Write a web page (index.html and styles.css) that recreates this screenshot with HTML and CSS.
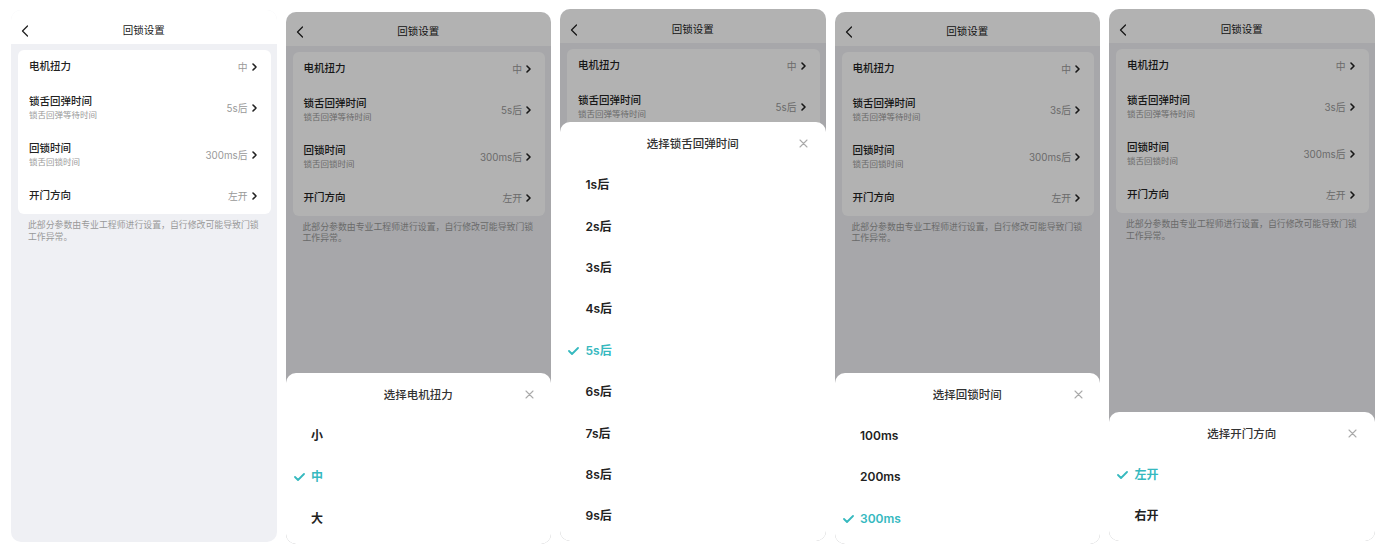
FILE: index.html
```html
<!DOCTYPE html>
<html lang="zh-CN">
<head>
  <meta charset="UTF-8">
  <meta name="viewport" content="width=device-width, initial-scale=1.0">
  <title>回锁设置</title>
  <link rel="stylesheet" href="styles.css">
</head>
<body>
  <div class="board">

    <!-- 1: settings page -->
    <div class="screen screen-a">
      <div class="nav">
        <svg class="back" width="8" height="12" viewBox="0 0 8 12"><polyline points="6.5,1 1.5,6 6.5,11" fill="none" stroke="#222" stroke-width="1.3" stroke-linecap="round" stroke-linejoin="round"/></svg>
        <div class="nav-title">回锁设置</div>
      </div>
      <div class="card">
        <div class="row"><div class="row-main"><div class="row-title">电机扭力</div></div><div class="row-value">中<svg class="arrow" width="5" height="8" viewBox="0 0 5 8"><polyline points="1,1 4,4 1,7" fill="none" stroke="#222" stroke-width="1.6" stroke-linecap="round" stroke-linejoin="round"/></svg></div></div>
        <div class="row"><div class="row-main"><div class="row-title">锁舌回弹时间</div><div class="row-sub">锁舌回弹等待时间</div></div><div class="row-value">5s后<svg class="arrow" width="5" height="8" viewBox="0 0 5 8"><polyline points="1,1 4,4 1,7" fill="none" stroke="#222" stroke-width="1.6" stroke-linecap="round" stroke-linejoin="round"/></svg></div></div>
        <div class="row"><div class="row-main"><div class="row-title">回锁时间</div><div class="row-sub">锁舌回锁时间</div></div><div class="row-value">300ms后<svg class="arrow" width="5" height="8" viewBox="0 0 5 8"><polyline points="1,1 4,4 1,7" fill="none" stroke="#222" stroke-width="1.6" stroke-linecap="round" stroke-linejoin="round"/></svg></div></div>
        <div class="row"><div class="row-main"><div class="row-title">开门方向</div></div><div class="row-value">左开<svg class="arrow" width="5" height="8" viewBox="0 0 5 8"><polyline points="1,1 4,4 1,7" fill="none" stroke="#222" stroke-width="1.6" stroke-linecap="round" stroke-linejoin="round"/></svg></div></div>
      </div>
      <p class="note">此部分参数由专业工程师进行设置，自行修改可能导致门锁工作异常。</p>
    </div>

    <!-- 2: motor torque -->
    <div class="screen screen-b">
      <div class="nav">
        <svg class="back" width="8" height="12" viewBox="0 0 8 12"><polyline points="6.5,1 1.5,6 6.5,11" fill="none" stroke="#222" stroke-width="1.3" stroke-linecap="round" stroke-linejoin="round"/></svg>
        <div class="nav-title">回锁设置</div>
      </div>
      <div class="card">
        <div class="row"><div class="row-main"><div class="row-title">电机扭力</div></div><div class="row-value">中<svg class="arrow" width="5" height="8" viewBox="0 0 5 8"><polyline points="1,1 4,4 1,7" fill="none" stroke="#222" stroke-width="1.6" stroke-linecap="round" stroke-linejoin="round"/></svg></div></div>
        <div class="row"><div class="row-main"><div class="row-title">锁舌回弹时间</div><div class="row-sub">锁舌回弹等待时间</div></div><div class="row-value">5s后<svg class="arrow" width="5" height="8" viewBox="0 0 5 8"><polyline points="1,1 4,4 1,7" fill="none" stroke="#222" stroke-width="1.6" stroke-linecap="round" stroke-linejoin="round"/></svg></div></div>
        <div class="row"><div class="row-main"><div class="row-title">回锁时间</div><div class="row-sub">锁舌回锁时间</div></div><div class="row-value">300ms后<svg class="arrow" width="5" height="8" viewBox="0 0 5 8"><polyline points="1,1 4,4 1,7" fill="none" stroke="#222" stroke-width="1.6" stroke-linecap="round" stroke-linejoin="round"/></svg></div></div>
        <div class="row"><div class="row-main"><div class="row-title">开门方向</div></div><div class="row-value">左开<svg class="arrow" width="5" height="8" viewBox="0 0 5 8"><polyline points="1,1 4,4 1,7" fill="none" stroke="#222" stroke-width="1.6" stroke-linecap="round" stroke-linejoin="round"/></svg></div></div>
      </div>
      <p class="note">此部分参数由专业工程师进行设置，自行修改可能导致门锁工作异常。</p>
      <div class="mask">
        <div class="sheet">
          <div class="sheet-head">
            <div class="sheet-title">选择电机扭力</div>
            <svg class="close" width="9" height="9" viewBox="0 0 9 9"><path d="M1 1L8 8M8 1L1 8" stroke="#aaa" stroke-width="1.1" stroke-linecap="round"/></svg>
          </div>
          <div class="option"><span class="tick"></span>小</div>
          <div class="option is-on"><span class="tick"><svg width="11" height="8" viewBox="0 0 11 8"><polyline points="1,4 4,7 10,1" fill="none" stroke="#36b9bf" stroke-width="1.8" stroke-linecap="round" stroke-linejoin="round"/></svg></span>中</div>
          <div class="option"><span class="tick"></span>大</div>
        </div>
      </div>
    </div>

    <!-- 3: latch rebound time -->
    <div class="screen screen-c">
      <div class="nav">
        <svg class="back" width="8" height="12" viewBox="0 0 8 12"><polyline points="6.5,1 1.5,6 6.5,11" fill="none" stroke="#222" stroke-width="1.3" stroke-linecap="round" stroke-linejoin="round"/></svg>
        <div class="nav-title">回锁设置</div>
      </div>
      <div class="card">
        <div class="row"><div class="row-main"><div class="row-title">电机扭力</div></div><div class="row-value">中<svg class="arrow" width="5" height="8" viewBox="0 0 5 8"><polyline points="1,1 4,4 1,7" fill="none" stroke="#222" stroke-width="1.6" stroke-linecap="round" stroke-linejoin="round"/></svg></div></div>
        <div class="row"><div class="row-main"><div class="row-title">锁舌回弹时间</div><div class="row-sub">锁舌回弹等待时间</div></div><div class="row-value">5s后<svg class="arrow" width="5" height="8" viewBox="0 0 5 8"><polyline points="1,1 4,4 1,7" fill="none" stroke="#222" stroke-width="1.6" stroke-linecap="round" stroke-linejoin="round"/></svg></div></div>
        <div class="row"><div class="row-main"><div class="row-title">回锁时间</div><div class="row-sub">锁舌回锁时间</div></div><div class="row-value">300ms后<svg class="arrow" width="5" height="8" viewBox="0 0 5 8"><polyline points="1,1 4,4 1,7" fill="none" stroke="#222" stroke-width="1.6" stroke-linecap="round" stroke-linejoin="round"/></svg></div></div>
        <div class="row"><div class="row-main"><div class="row-title">开门方向</div></div><div class="row-value">左开<svg class="arrow" width="5" height="8" viewBox="0 0 5 8"><polyline points="1,1 4,4 1,7" fill="none" stroke="#222" stroke-width="1.6" stroke-linecap="round" stroke-linejoin="round"/></svg></div></div>
      </div>
      <p class="note">此部分参数由专业工程师进行设置，自行修改可能导致门锁工作异常。</p>
      <div class="mask">
        <div class="sheet">
          <div class="sheet-head">
            <div class="sheet-title">选择锁舌回弹时间</div>
            <svg class="close" width="9" height="9" viewBox="0 0 9 9"><path d="M1 1L8 8M8 1L1 8" stroke="#aaa" stroke-width="1.1" stroke-linecap="round"/></svg>
          </div>
          <div class="option"><span class="tick"></span>1s后</div>
          <div class="option"><span class="tick"></span>2s后</div>
          <div class="option"><span class="tick"></span>3s后</div>
          <div class="option"><span class="tick"></span>4s后</div>
          <div class="option is-on"><span class="tick"><svg width="11" height="8" viewBox="0 0 11 8"><polyline points="1,4 4,7 10,1" fill="none" stroke="#36b9bf" stroke-width="1.8" stroke-linecap="round" stroke-linejoin="round"/></svg></span>5s后</div>
          <div class="option"><span class="tick"></span>6s后</div>
          <div class="option"><span class="tick"></span>7s后</div>
          <div class="option"><span class="tick"></span>8s后</div>
          <div class="option"><span class="tick"></span>9s后</div>
        </div>
      </div>
    </div>

    <!-- 4: relock time -->
    <div class="screen screen-b">
      <div class="nav">
        <svg class="back" width="8" height="12" viewBox="0 0 8 12"><polyline points="6.5,1 1.5,6 6.5,11" fill="none" stroke="#222" stroke-width="1.3" stroke-linecap="round" stroke-linejoin="round"/></svg>
        <div class="nav-title">回锁设置</div>
      </div>
      <div class="card">
        <div class="row"><div class="row-main"><div class="row-title">电机扭力</div></div><div class="row-value">中<svg class="arrow" width="5" height="8" viewBox="0 0 5 8"><polyline points="1,1 4,4 1,7" fill="none" stroke="#222" stroke-width="1.6" stroke-linecap="round" stroke-linejoin="round"/></svg></div></div>
        <div class="row"><div class="row-main"><div class="row-title">锁舌回弹时间</div><div class="row-sub">锁舌回弹等待时间</div></div><div class="row-value">3s后<svg class="arrow" width="5" height="8" viewBox="0 0 5 8"><polyline points="1,1 4,4 1,7" fill="none" stroke="#222" stroke-width="1.6" stroke-linecap="round" stroke-linejoin="round"/></svg></div></div>
        <div class="row"><div class="row-main"><div class="row-title">回锁时间</div><div class="row-sub">锁舌回锁时间</div></div><div class="row-value">300ms后<svg class="arrow" width="5" height="8" viewBox="0 0 5 8"><polyline points="1,1 4,4 1,7" fill="none" stroke="#222" stroke-width="1.6" stroke-linecap="round" stroke-linejoin="round"/></svg></div></div>
        <div class="row"><div class="row-main"><div class="row-title">开门方向</div></div><div class="row-value">左开<svg class="arrow" width="5" height="8" viewBox="0 0 5 8"><polyline points="1,1 4,4 1,7" fill="none" stroke="#222" stroke-width="1.6" stroke-linecap="round" stroke-linejoin="round"/></svg></div></div>
      </div>
      <p class="note">此部分参数由专业工程师进行设置，自行修改可能导致门锁工作异常。</p>
      <div class="mask">
        <div class="sheet">
          <div class="sheet-head">
            <div class="sheet-title">选择回锁时间</div>
            <svg class="close" width="9" height="9" viewBox="0 0 9 9"><path d="M1 1L8 8M8 1L1 8" stroke="#aaa" stroke-width="1.1" stroke-linecap="round"/></svg>
          </div>
          <div class="option"><span class="tick"></span>100ms</div>
          <div class="option"><span class="tick"></span>200ms</div>
          <div class="option is-on"><span class="tick"><svg width="11" height="8" viewBox="0 0 11 8"><polyline points="1,4 4,7 10,1" fill="none" stroke="#36b9bf" stroke-width="1.8" stroke-linecap="round" stroke-linejoin="round"/></svg></span>300ms</div>
        </div>
      </div>
    </div>

    <!-- 5: door direction -->
    <div class="screen screen-c">
      <div class="nav">
        <svg class="back" width="8" height="12" viewBox="0 0 8 12"><polyline points="6.5,1 1.5,6 6.5,11" fill="none" stroke="#222" stroke-width="1.3" stroke-linecap="round" stroke-linejoin="round"/></svg>
        <div class="nav-title">回锁设置</div>
      </div>
      <div class="card">
        <div class="row"><div class="row-main"><div class="row-title">电机扭力</div></div><div class="row-value">中<svg class="arrow" width="5" height="8" viewBox="0 0 5 8"><polyline points="1,1 4,4 1,7" fill="none" stroke="#222" stroke-width="1.6" stroke-linecap="round" stroke-linejoin="round"/></svg></div></div>
        <div class="row"><div class="row-main"><div class="row-title">锁舌回弹时间</div><div class="row-sub">锁舌回弹等待时间</div></div><div class="row-value">3s后<svg class="arrow" width="5" height="8" viewBox="0 0 5 8"><polyline points="1,1 4,4 1,7" fill="none" stroke="#222" stroke-width="1.6" stroke-linecap="round" stroke-linejoin="round"/></svg></div></div>
        <div class="row"><div class="row-main"><div class="row-title">回锁时间</div><div class="row-sub">锁舌回锁时间</div></div><div class="row-value">300ms后<svg class="arrow" width="5" height="8" viewBox="0 0 5 8"><polyline points="1,1 4,4 1,7" fill="none" stroke="#222" stroke-width="1.6" stroke-linecap="round" stroke-linejoin="round"/></svg></div></div>
        <div class="row"><div class="row-main"><div class="row-title">开门方向</div></div><div class="row-value">左开<svg class="arrow" width="5" height="8" viewBox="0 0 5 8"><polyline points="1,1 4,4 1,7" fill="none" stroke="#222" stroke-width="1.6" stroke-linecap="round" stroke-linejoin="round"/></svg></div></div>
      </div>
      <p class="note">此部分参数由专业工程师进行设置，自行修改可能导致门锁工作异常。</p>
      <div class="mask">
        <div class="sheet">
          <div class="sheet-head">
            <div class="sheet-title">选择开门方向</div>
            <svg class="close" width="9" height="9" viewBox="0 0 9 9"><path d="M1 1L8 8M8 1L1 8" stroke="#aaa" stroke-width="1.1" stroke-linecap="round"/></svg>
          </div>
          <div class="option is-on"><span class="tick"><svg width="11" height="8" viewBox="0 0 11 8"><polyline points="1,4 4,7 10,1" fill="none" stroke="#36b9bf" stroke-width="1.8" stroke-linecap="round" stroke-linejoin="round"/></svg></span>左开</div>
          <div class="option"><span class="tick"></span>右开</div>
        </div>
      </div>
    </div>

  </div>
</body>
</html>
```

FILE: styles.css
```css
body {
  margin: 0;
  background-color: #fff;
  color: #222;
  font-family: Inter, "Noto Sans CJK SC", sans-serif;
}
.board {
  display: flex;
  align-items: flex-start;
  gap: 9px;
  padding-left: 11px;
}
.screen {
  position: relative;
  width: 265.5px;
  height: 532px;
  flex: none;
  background-color: #eff0f4;
  border-radius: 10px;
  overflow: hidden;
}
.screen-a {
  margin-top: 10px;
}
.screen-b {
  margin-top: 11.5px;
}
.screen-c {
  margin-top: 9px;
}
.nav {
  display: grid;
  grid-template-columns: 44px 1fr 44px;
  align-items: center;
  height: 34px;
  padding-top: 7px;
  box-sizing: border-box;
  background-color: #fff;
}
.back {
  margin-left: 10px;
}
.nav-title {
  text-align: center;
  font-size: 10.5px;
  line-height: 14px;
  color: #222;
}
.card {
  margin: 6px 6px 0 7px;
  background-color: #fff;
  border-radius: 6px;
}
.row {
  display: flex;
  align-items: center;
  justify-content: space-between;
  padding: 10px 14px 11px 11px;
}
.row-title {
  font-size: 10.5px;
  line-height: 14px;
  font-weight: 500;
  color: #222;
}
.row-sub {
  font-size: 8.5px;
  line-height: 12px;
  color: #999;
}
.row-value {
  display: flex;
  align-items: center;
  font-size: 9.8px;
  color: #999;
}
.arrow {
  margin-left: 4px;
}
.note {
  margin: 5px 0 0;
  padding: 0 14px 0 17px;
  font-size: 8.9px;
  line-height: 11.5px;
  color: #999;
}
.mask {
  position: absolute;
  inset: 0;
  display: flex;
  flex-direction: column;
  justify-content: flex-end;
  background-color: rgba(0, 0, 0, 0.3);
}
.sheet {
  padding-bottom: 4px;
  background-color: #fff;
  border-radius: 10px 10px 0 0;
}
.sheet-head {
  display: grid;
  grid-template-columns: 44px 1fr 44px;
  align-items: center;
  height: 42px;
}
.sheet-title {
  grid-column: 2;
  text-align: center;
  font-size: 11.5px;
  font-weight: 500;
  color: #333;
}
.close {
  justify-self: center;
}
.option {
  display: flex;
  align-items: center;
  height: 41.4px;
  padding-left: 8px;
  font-size: 12px;
  line-height: 16px;
  font-weight: 600;
  color: #222;
}
.option.is-on {
  color: #36b9bf;
}
.tick {
  display: flex;
  width: 17.5px;
}
```
